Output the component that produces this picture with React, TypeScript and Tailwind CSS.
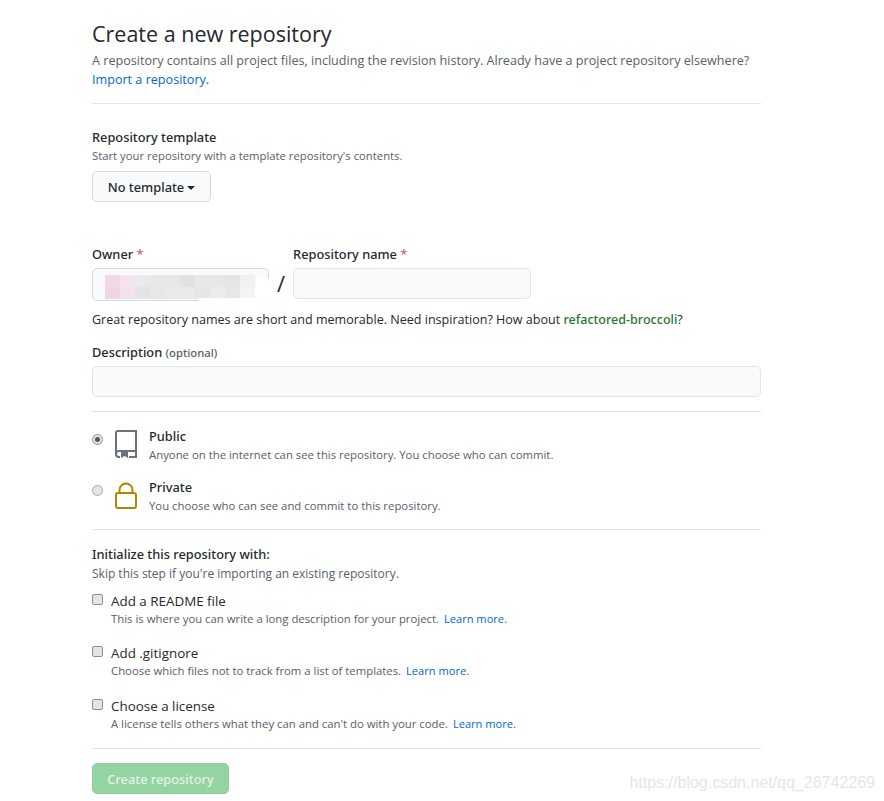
import React from 'react';

const font = { fontFamily: '"Open Sans", "Noto Sans", sans-serif' };
const label = "font-['Noto_Sans'] font-medium text-[12.800px] text-[#24292e]";

const ownerBlur = [
  'bg-[#efd9e6]', 'bg-[#f4e3ec]', 'bg-[#e9eaeb]', 'bg-[#e7e8e9]', 'bg-[#e6e7e8]', 'bg-[#e1e2e3]', 'bg-[#e7e8e9]', 'bg-[#e6e7e8]', 'bg-[#e4e5e6]', 'bg-[#f0f1f2]',
  'bg-[#efd5e3]', 'bg-[#f3e2eb]', 'bg-[#e3e4e5]', 'bg-[#e6e7e8]', 'bg-[#e9eaeb]', 'bg-[#e9eaeb]', 'bg-[#e5e6e7]', 'bg-[#ebeced]', 'bg-[#e6e7e8]', 'bg-[#f3f4f5]',
];

const Check = ({ title, desc }: { title: string; desc: string }) => (
  <div className="flex items-start h-[52.500px]">
    <input type="checkbox" className="w-[11px] h-[11px] mt-[2px] mr-[8px] shrink-0 appearance-none rounded-[2px] border border-[#8f8f8f] bg-[#e4e4e4]" readOnly />
    <div>
      <div className="text-[13.400px] leading-[18px] text-[#24292e] font-normal">{title}</div>
      <div className="text-[11.350px] leading-[18px] text-[#586069]">
        {desc} <a className="ml-[2px] text-[11.100px] text-[#0366d6]">Learn more.</a>
      </div>
    </div>
  </div>
);

const App: React.FC = () => {
  return (
    <div className="relative w-[884px] h-[801px] overflow-hidden bg-white" style={font}>
      <div className="w-[669px] ml-[92px] pt-[19px]">
        <h1 className="text-[21.500px] leading-[29px] text-[#24292e] font-normal">Create a new repository</h1>
        <p className="mt-[3px] text-[12.600px] leading-[19px] text-[#586069]">
          A repository contains all project files, including the revision history. Already have a project repository elsewhere?
          <br />
          <a className="text-[#0366d6]">Import a repository.</a>
        </p>
        <div className="mt-[14px] border-t border-[#e1e4e8]" />

        <div className={`mt-[24px] leading-[19px] ${label}`}>Repository template</div>
        <div className="text-[11.300px] leading-[17px] text-[#586069]">Start your repository with a template repository's contents.</div>
        <button className={`mt-[7px] w-[119px] h-[31px] pt-[3px] flex items-center justify-center gap-[3px] rounded-[5px] border border-[#d6d9dd] bg-[#f9fafb] ${label}`}>
          No template
          <span className="w-0 h-0 border-x-[4px] border-x-transparent border-t-[4px] border-t-[#24292e]" />
        </button>

        <div className="mt-[43px] flex items-start">
          <div className="w-[177px]">
            <div className={`leading-[19px] ${label}`}>
              Owner <span className="text-[#d9606a]">*</span>
            </div>
            <div className="relative mt-[4px] h-[33px] rounded-[5px] border border-[#d6d9dd] bg-[#f9fafb]">
              <div className="absolute left-[12px] top-[6px] w-[150px] h-[24px] grid grid-cols-10 grid-rows-2">
                {ownerBlur.map((c, i) => (
                  <div key={i} className={c} />
                ))}
              </div>
              {/* smudge over the border, bottom right */}
              <div className="absolute left-[105px] top-[29px] w-[76px] h-[8px] rounded-b-full bg-white" />
              <div className="absolute left-[162px] top-[8px] w-[18px] h-[26px] rounded-full bg-white" />
            </div>
          </div>
          <span className="mt-[23px] ml-[8px] text-[22px] leading-[30px] text-[#24292e]">/</span>
          <div className="ml-[8px] w-[238px]">
            <div className={`leading-[19px] ${label}`}>
              Repository name <span className="text-[#d9606a]">*</span>
            </div>
            <input className="mt-[4px] block w-full h-[31px] rounded-[5px] border border-[#e1e4e8] bg-[#f9fafb]" />
          </div>
        </div>

        <p className="mt-[9px] text-[12.550px] leading-[19px] text-[#24292e]">
          Great repository names are short and memorable. Need inspiration? How about <span className="font-['Noto_Sans'] font-medium text-[#28762f]">refactored-broccoli</span>?
        </p>

        <div className={`mt-[14px] leading-[19px] ${label}`}>
          Description <span className="text-[11.300px] text-[#586069]">(optional)</span>
        </div>
        <input className="mt-[4px] block w-full h-[31px] rounded-[5px] border border-[#e1e4e8] bg-[#f9fafb]" />

        <div className="mt-[14px] border-t border-[#e1e4e8]" />

        <div className="mt-[16px] flex items-start h-[51px]">
          <span className="mt-[6px] ml-0 w-[11px] h-[11px] rounded-full border border-[#8f8f8f] bg-[#e4e4e4] flex items-center justify-center">
            <span className="w-[5px] h-[5px] rounded-full bg-[#555]" />
          </span>
          <svg className="ml-[12px] mt-[2px]" width="22" height="28" viewBox="0 0 22 28" fill="none" stroke="#6a737d" strokeWidth="2">
            <path d="M1 24V3a2 2 0 0 1 2-2h18v26h-7" />
            <path d="M1 24a3 3 0 0 1 3-3h17M1 24a3 3 0 0 0 3 3h1" />
            <path d="M6 22h7v6l-3.500-2-3.500 2z" fill="#6a737d" stroke="none" />
          </svg>
          <div className="ml-[12px]">
            <div className={`leading-[17px] ${label}`}>Public</div>
            <div className="text-[11.350px] leading-[19px] text-[#586069]">Anyone on the internet can see this repository. You choose who can commit.</div>
          </div>
        </div>

        <div className="flex items-start h-[42px]">
          <span className="mt-[6px] w-[11px] h-[11px] rounded-full border border-[#a9a9a9] bg-[#e4e4e4]" />
          <svg className="ml-[12px] mt-[3px]" width="22" height="27" viewBox="0 0 22 27" fill="none" stroke="#b08800" strokeWidth="2">
            <rect x="1" y="11" width="20" height="15" rx="2" />
            <path d="M4.500 11V8a6.500 6.500 0 0 1 13 0v3" />
          </svg>
          <div className="ml-[12px]">
            <div className={`leading-[17px] ${label}`}>Private</div>
            <div className="text-[11.350px] leading-[19px] text-[#586069]">You choose who can see and commit to this repository.</div>
          </div>
        </div>

        <div className="mt-[8px] border-t border-[#e1e4e8]" />

        <div className={`mt-[15px] leading-[19px] ${label}`}>Initialize this repository with:</div>
        <div className="mt-[1px] text-[12px] leading-[18px] text-[#586069]">Skip this step if you're importing an existing repository.</div>

        <div className="mt-[8.750px]">
          <Check title="Add a README file" desc="This is where you can write a long description for your project." />
          <Check title="Add .gitignore" desc="Choose which files not to track from a list of templates." />
          <Check title="Choose a license" desc="A license tells others what they can and can't do with your code." />
        </div>

        <div className="-mt-[1.750px] border-t border-[#e1e4e8]" />

        <button className="mt-[14px] w-[137px] h-[31px] pt-[3px] rounded-[5px] border border-[#8ccf9c] bg-[#94d3a2] font-['Noto_Sans'] font-medium text-[12.800px] text-[#e4f4e8]">
          Create repository
        </button>
      </div>

      {/* watermark */}
      <div className="absolute right-[9px] top-[773px] text-[16px] leading-[20px] text-[#e6e6e6]" style={{ fontFamily: '"Liberation Sans", sans-serif' }}>
        https://blog.csdn.net/qq_26742269
      </div>
    </div>
  );
};

export default App;
